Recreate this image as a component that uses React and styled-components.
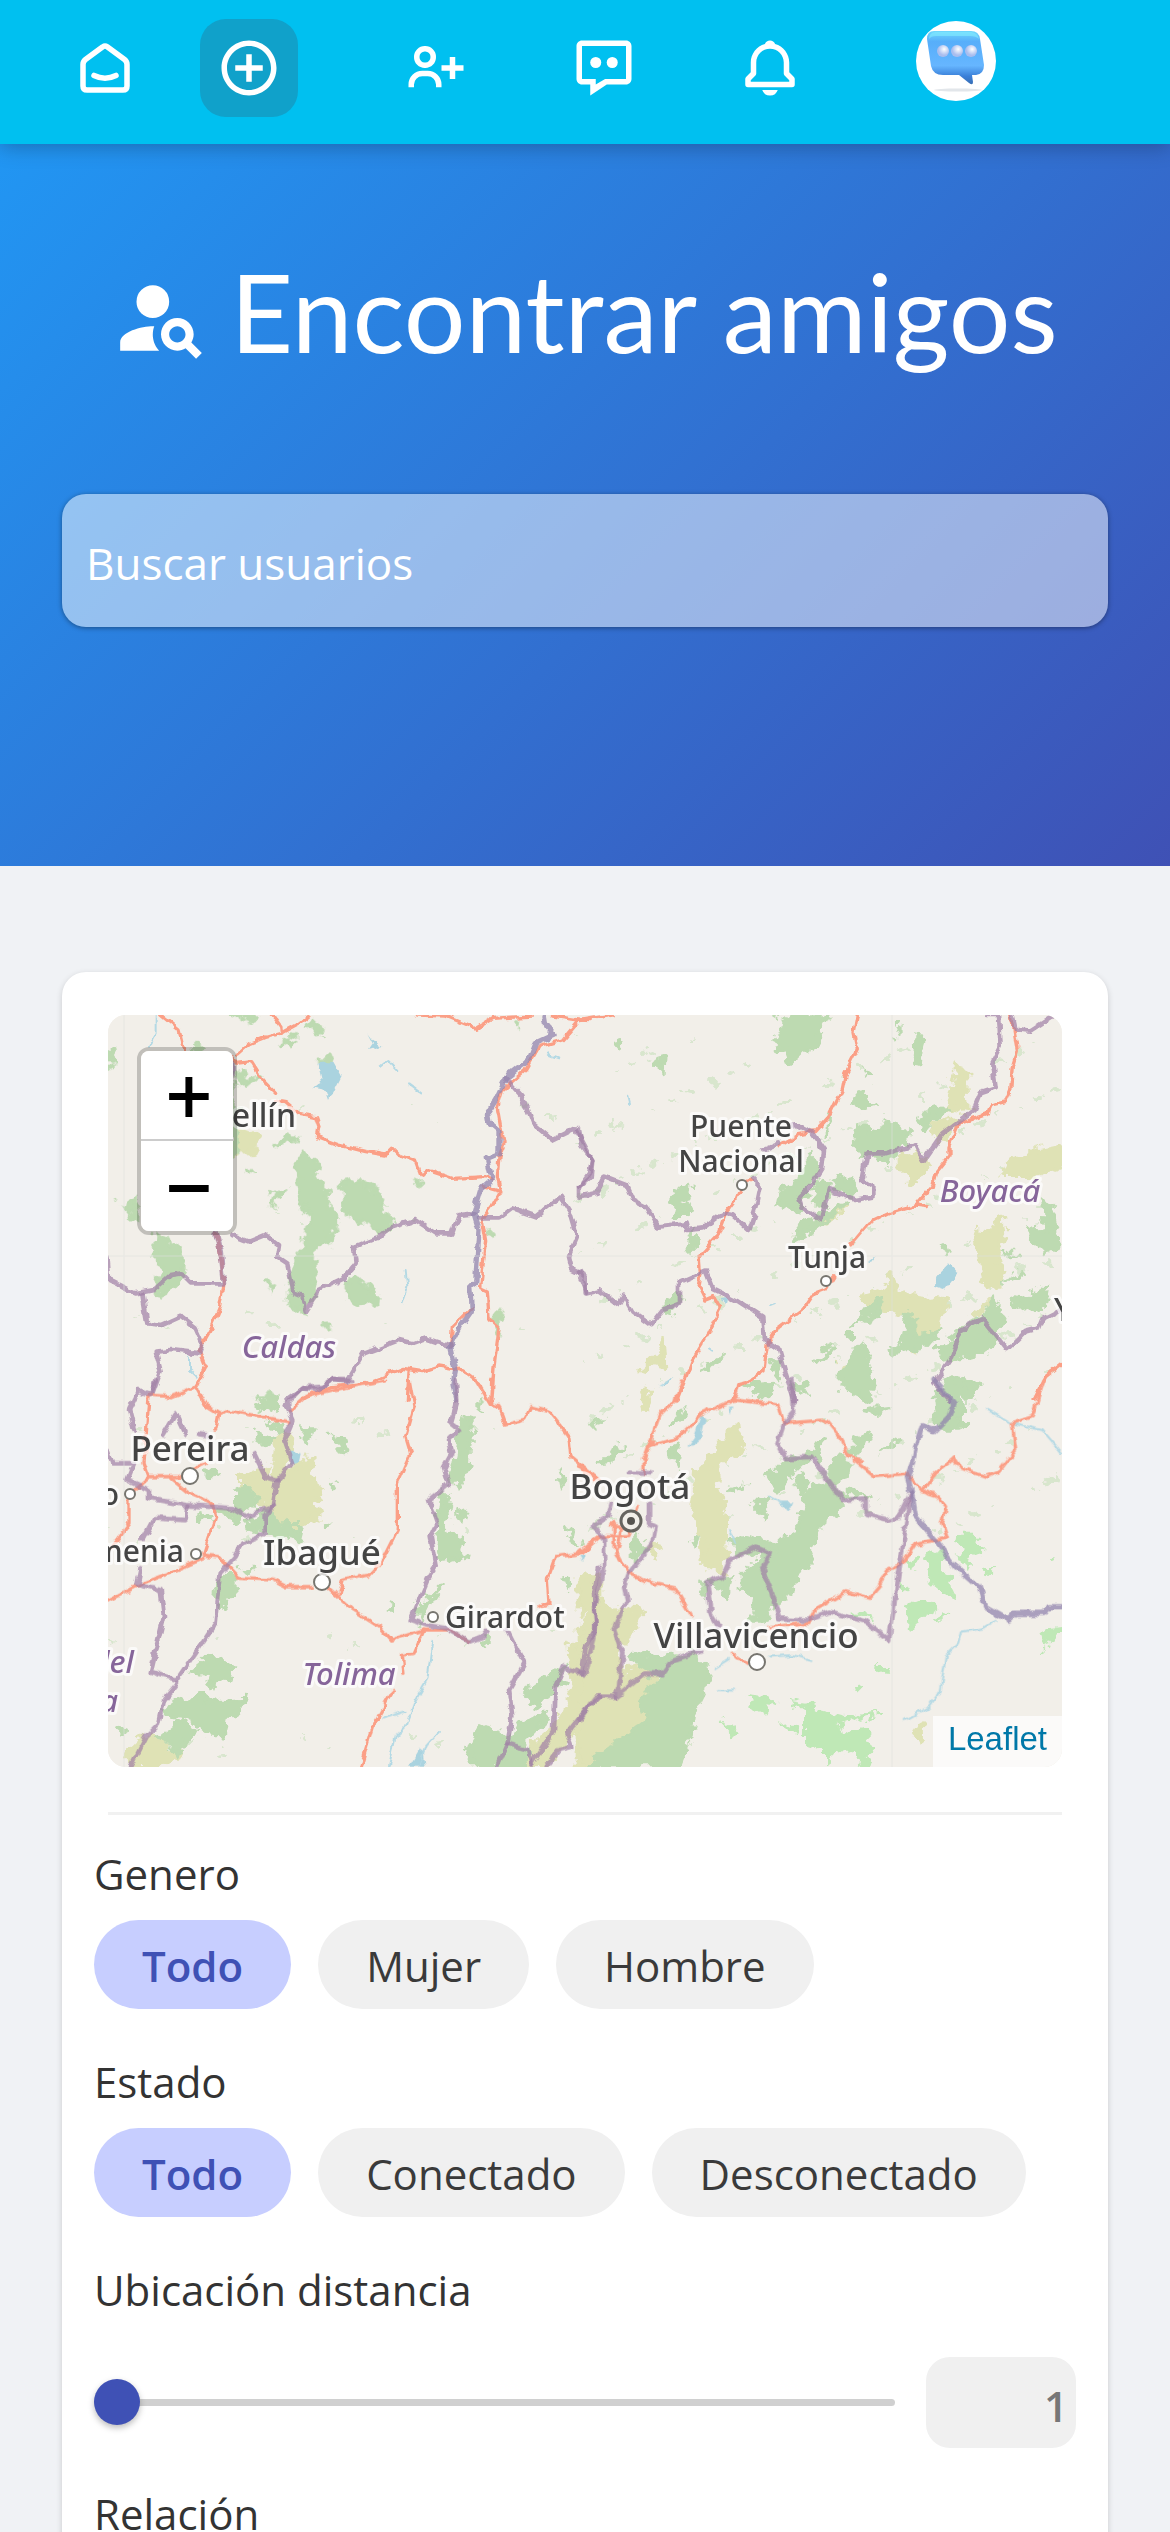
import React, { useState } from "react";
import styled, { createGlobalStyle } from "styled-components";
import { BiPlusCircle, BiUserPlus, BiBell } from "react-icons/bi";
import { MdPersonSearch } from "react-icons/md";

const GlobalStyle = createGlobalStyle`
  *, *::before, *::after { box-sizing: border-box; }
  body { margin: 0; background: #f0f2f5; }
`;

const Page = styled.div`
  height: 100vh;
  overflow-y: auto;
  scrollbar-width: none;
  background: #f0f2f5;
  color: #333;
  font-family: "Open Sans", "Noto Sans", sans-serif;
  font-size: 42px;
`;

const TopBar = styled.header`
  position: sticky;
  top: 0;
  z-index: 10;
  height: 144px;
  background: #00c0f0;
  box-shadow: 0 2px 20px rgba(0, 0, 0, 0.28);
`;

const Nav = styled.nav`
  display: grid;
  grid-template-columns: 144fr 187fr 168fr 166fr 186fr 263fr;
  padding: 19px 0 0 56px;
`;

const NavLink = styled.a`
  display: flex;
  align-items: center;
  justify-content: center;
  width: 98px;
  height: 98px;
  border-radius: 26px;
  color: #fff;
  background: ${(p) => (p.$active ? "rgba(31, 130, 164, 0.5)" : "transparent")};

  svg {
    width: 66px;
    height: 66px;
  }
`;

const AvatarButton = styled.button`
  width: 98px;
  height: 84px;
  padding: 0;
  border: 0;
  background: none;

  svg {
    display: block;
    width: 80px;
    height: 80px;
    margin: 0 auto;
  }
`;

const Hero = styled.section`
  padding: 102px 62px 239px;
  background: linear-gradient(135deg, #2196f3 0%, #3f51b5 100%);
`;

const HeroTitle = styled.h1`
  display: flex;
  align-items: flex-end;
  justify-content: center;
  gap: 20px;
  margin: 0 0 118px;
  color: #fff;
  font-family: Lato, sans-serif;
  font-size: 109px;
  font-weight: 400;
  line-height: 130px;
  white-space: nowrap;

  svg {
    flex: none;
    width: 98px;
    height: 98px;
    margin-bottom: 9px;
  }
`;

const SearchInput = styled.input`
  display: block;
  width: 100%;
  height: 133px;
  padding: 4px 24px 0;
  border: 0;
  border-radius: 24px;
  outline: 0;
  background: rgba(255, 255, 255, 0.5);
  box-shadow: 0 1px 5px rgba(0, 0, 0, 0.4);
  color: #fff;
  font: 400 44px "Open Sans", sans-serif;

  &::placeholder {
    color: #fff;
    opacity: 1;
  }
`;

const Main = styled.main`
  padding: 106px 62px 62px;
`;

const Card = styled.section`
  padding: 43px 0;
  border-radius: 24px;
  background: #fff;
  box-shadow: 0 2px 6px rgba(0, 0, 0, 0.16);
`;

const MapFrame = styled.div`
  position: relative;
  height: 752px;
  margin: 0 46px;
  overflow: hidden;
  border-radius: 18px;
  background: #f2efe9;

  > svg {
    display: block;
    width: 100%;
    height: 100%;
  }
`;

const ZoomControl = styled.div`
  position: absolute;
  top: 32px;
  left: 29px;
  display: flex;
  flex-direction: column;
  border: 4px solid rgba(0, 0, 0, 0.2);
  border-radius: 12px;
  background-clip: padding-box;
`;

const ZoomButton = styled.button`
  width: 92px;
  height: 90px;
  padding: 0 0 0 4px;
  border: 0;
  background: #fff;
  color: #000;
  font: 400 60px/80px "DejaVu Sans", sans-serif;
  -webkit-text-stroke: 2px #000;

  &:first-child {
    border-bottom: 2px solid #ccc;
    border-radius: 8px 8px 0 0;
  }
  &:last-child {
    border-radius: 0 0 8px 8px;
  }
`;

const Attribution = styled.div`
  position: absolute;
  right: 0;
  bottom: 0;
  padding: 0 15px 5px;
  background: rgba(255, 255, 255, 0.7);
  font: 33px/46px "Liberation Sans", Arial, sans-serif;

  a {
    color: #0078a8;
    text-decoration: none;
  }
`;

const Divider = styled.hr`
  height: 3px;
  margin: 45px 46px 29px;
  border: 0;
  background: #f1f1f1;
`;

const Filters = styled.form`
  display: flex;
  flex-direction: column;
  gap: 43px;
  padding: 0 32px;
`;

const Field = styled.div`
  display: flex;
  flex-direction: column;
  gap: 16px;
`;

const FieldLabel = styled.label`
  line-height: 60px;
`;

const PillRow = styled.div`
  display: flex;
  flex-wrap: wrap;
  gap: 27px;
`;

const Pill = styled.label`
  display: block;
  height: 89px;
  padding: 2px 48px 0;
  border-radius: 45px;
  background: ${(p) => (p.$checked ? "#c7ceff" : "#f0f0f0")};
  color: ${(p) => (p.$checked ? "#3f51b5" : "#3a3a3a")};
  font-weight: ${(p) => (p.$checked ? 600 : 400)};
  line-height: 87px;
  cursor: pointer;
`;

const HiddenRadio = styled.input`
  position: absolute;
  width: 1px;
  height: 1px;
  margin: 0;
  opacity: 0;
  pointer-events: none;
`;

const DistanceField = styled(Field)`
  margin-bottom: -7px;
`;

const DistanceRow = styled.div`
  display: flex;
  align-items: center;
  gap: 31px;
  margin-top: 21px;
`;

const Range = styled.input`
  flex: 1;
  min-width: 0;
  height: 48px;
  margin: 0;
  appearance: none;
  background: transparent;

  &::-webkit-slider-runnable-track {
    height: 7px;
    border-radius: 4px;
    background: #d0d0d0;
  }
  &::-webkit-slider-thumb {
    appearance: none;
    width: 46px;
    height: 46px;
    margin-top: -20px;
    border: 0;
    border-radius: 50%;
    background: #3f51b5;
    box-shadow: 0 3px 6px rgba(0, 0, 0, 0.26);
  }
`;

const DistanceValue = styled.input`
  width: 150px;
  height: 91px;
  padding: 6px 8px 0;
  border: 0;
  border-radius: 24px;
  background: #f0f0f0;
  color: #777;
  font: 600 42px "Open Sans", sans-serif;
  text-align: right;
`;

function HomeIcon() {
  return (
    <svg viewBox="0 0 24 24" fill="none" stroke="currentColor" strokeWidth="2" strokeLinecap="round" aria-hidden="true">
      <path d="M11.200 4.300L4.900 8.900Q4 9.600 4 10.700V18.500Q4 20 5.500 20H18.500Q20 20 20 18.500V10.700Q20 9.600 19.100 8.900L12.800 4.300Q12 3.700 11.200 4.300z" />
      <path d="M8 14.700q4 2 8 0" />
    </svg>
  );
}

function ChatIcon() {
  return (
    <svg viewBox="0 0 24 24" fill="currentColor" aria-hidden="true">
      <path
        fillRule="evenodd"
        d="M20 2H4c-1.100 0-2 .9-2 2v12c0 1.100.9 2 2 2h3v4l6-4h7c1.100 0 2-.9 2-2V4c0-1.100-.9-2-2-2zM20 16h-7.600L9 18v-2H4V4h16z"
      />
      <circle cx="9" cy="10" r="2" />
      <circle cx="15" cy="10" r="2" />
    </svg>
  );
}

function AvatarPicture() {
  return (
    <svg viewBox="0 0 80 80" aria-hidden="true">
      <defs>
        <linearGradient id="bubble" x1="0" y1="0" x2="0" y2="1">
          <stop offset="0" stopColor="#6fd8fc" />
          <stop offset="0.2" stopColor="#57aefa" />
          <stop offset="0.65" stopColor="#66b6ff" />
          <stop offset="0.85" stopColor="#3a7fd8" />
          <stop offset="1" stopColor="#386fb5" />
        </linearGradient>
        <radialGradient id="pearl" cx="0.6" cy="0.35">
          <stop offset="0" stopColor="#fff" />
          <stop offset="1" stopColor="#a9bdee" />
        </radialGradient>
      </defs>
      <circle cx="40" cy="40" r="40" fill="#fff" />
      <ellipse cx="42" cy="69" rx="24" ry="1.500" fill="#e2e6ea" />
      <path
        d="M18 10h37q8 0 9 8l4 26q0 9-8 10h-4l1 7q0 4-4 1l-10-8H27q-10 0-12-9l-4-27q0-8 7-8z"
        fill="url(#bubble)"
      />
      <path d="M19 11h36q7 1 8 7-3-3-9-3H20q-5 0-7 3 0-6 6-7z" fill="#84ecff" opacity="0.6" />
      {[27, 41, 55].map((x) => (
        <ellipse key={x} cx={x} cy="30" rx="6" ry="6" fill="url(#pearl)" />
      ))}
    </svg>
  );
}

/* Map geometry: every sector holds point lists in its own grid, three units to a pixel. */
const SECTORS = [
  {
    x: -8,
    y: -15,
    forest: [
      "610,460 640,466 650,480 670,500 640,520 690,565 680,600 720,660 690,700 700,730 650,740 645,860 620,940 570,920 565,860 590,770 620,740 630,650 600,560 590,520",
      "725,550 770,538 810,550 845,600 850,640 885,665 850,700 780,660 735,630 740,580",
      "740,850 770,830 835,880 830,910 790,920 735,880",
      "170,700 240,740 258,810 180,890 175,850 200,820 165,770",
      "530,440 560,405 600,420 560,425", "515,610 530,575 560,565 550,590", "390,45 470,45 460,68 430,55",
      "620,75 650,60 670,80 660,105", "555,120 590,110 575,145", "25,150 45,150 40,200 25,205", "60,620 110,590 110,655",
      "410,210 470,240 440,265 415,240", "500,845 530,855 520,870", "280,140 310,140 300,155", "1250,60 1265,60 1260,78",
      "950,545 970,540 960,560", "675,970 690,970 685,985", "450,512 465,512 458,522", "1170,695 1190,700 1180,708",
      "480,1195 540,1180 540,1200", "655,175 690,175 700,205 680,200", "400,250 410,260 412,460 400,470", "1185,935 1205,938 1200,1010 1190,960",
    ],
    heath: ["405,395 440,385 480,410 470,450 405,455"],
    water: ["655,190 700,185 725,230 690,300 680,270 640,262 670,250", "805,100 820,120 848,138 810,150 822,132"],
    stream: ["840,200 865,180 895,210", "930,250 970,280", "1345,160 1378,172", "170,45 170,100 150,140", "920,810 925,860 908,910", "270,1070 270,1110 290,1130"],
    road: [
      "185,45 240,90 255,150", "415,165 455,130 500,112 545,100 600,70 630,45", "520,45 545,80 548,100",
      "400,170 415,190 455,185 490,240 530,280",
      "530,300 560,305 600,340 650,350 660,380 655,410 680,420 720,435 800,455 860,465 880,445 900,465 950,485 965,525 990,512 1060,535 1160,530 1180,540",
      "955,45 1040,48 1130,85 1180,55 1300,48", "1360,48 1440,60 1480,62",
      "1440,60 1390,120 1320,140 1280,210 1210,270 1195,320 1205,380 1215,430 1200,470 1195,530 1205,575 1180,620 1150,660 1160,720 1145,860 1165,870 1170,960 1200,985 1185,1100 1178,1210",
      "1155,560 1205,575", "350,700 365,770 375,850 365,920 340,980 300,1050 320,1100 290,1160",
      "610,1195 700,1160 800,1150 910,1105 970,1115 1020,1098 1090,1110 1130,1140", "930,1115 925,1200", "1120,920 1060,980 1055,1040",
    ],
    border: [
      "1220,235 1270,290 1300,370 1360,420 1430,385 1480,480 1470,520 1440,560",
      "400,705 450,725 500,705 540,735 535,770 565,790 585,880 610,890 620,935 660,870 735,835 770,790 765,740 840,710 870,685 950,660 1010,700 1060,700 1080,645 1125,640",
      "1140,655 1200,655 1240,625 1310,650 1385,590 1415,640 1435,710 1410,770 1420,810 1460,830 1460,880",
      "25,770 30,840 110,880 165,870 215,825 245,820 275,850 375,850 365,760 350,700", "400,230 400,180",
      "130,880 145,970 190,975 245,950 290,985 310,1030 300,1060 220,1050 170,1055 185,1110 160,1180",
      "560,1200 610,1165 660,1170 700,1140 745,1145 795,1060 900,1020 940,1030 980,1015 1055,1040",
    ],
    river: ["1335,45 1340,75 1365,105 1310,130 1290,180 1220,235 1190,300 1165,340 1170,370 1200,395 1200,460 1165,475 1180,540 1145,570 1125,640 1140,690 1130,850 1115,860 1120,930 1085,980 1055,1040 1070,1110 1062,1150 1072,1200"],
  },
  {
    x: 472,
    y: -15,
    forest: [
      "630,45 745,45 715,100 720,140 670,160 635,190 620,150 580,130", "1005,110 1035,115 1025,185 1000,180",
      "820,310 835,275 855,270 880,320 850,330", "870,400 940,360 985,400 975,440 920,490 870,450 840,470 830,440 845,370",
      "690,475 720,500 700,550 650,630 605,620 615,570 650,545", "650,720 670,670 740,630 800,610 750,660 690,700",
      "760,540 830,530 820,590 790,570", "1020,350 1110,320 1070,360 1030,385",
      "1140,990 1210,950 1235,900 1270,930 1260,1000 1210,1070 1100,1080 1075,1040", "1060,1200 1120,1130 1200,1150 1180,1200",
      "1305,905 1350,890 1400,855 1390,920 1330,930", "930,1060 970,1020 985,930 1010,960 1010,1010 1085,990 1040,1040",
      "790,1100 850,1030 880,1130 870,1200 790,1160", "870,920 900,900 910,930 820,980", "715,1090 740,1050 770,1035 740,1075",
      "520,1160 590,1160 550,1200", "640,1160 690,1140 680,1180", "1340,690 1430,680 1430,740 1400,755", "265,890 300,880 290,940 265,930",
      "370,1110 430,1070 390,1120", "330,740 350,690 345,750", "270,610 295,570 330,560 340,590 310,600 330,640 290,640", "1280,760 1320,760 1290,770",
      "1280,840 1330,815 1300,840", "795,1010 820,1000 820,1020", "1395,600 1430,640 1440,690 1400,700", "580,1080 605,1080 600,1130 585,1110",
      "580,45 600,45 590,60", "110,130 130,125 122,145", "240,175 258,170 255,215 245,200", "860,205 880,230 870,225", "950,80 960,80 960,110", "745,330 755,340 745,400",
      "720,540 760,560 750,600 730,620 700,600", "1090,735 1100,735 1098,760",
    ],
    heath: [
      "1130,200 1160,210 1165,330 1105,320 1120,260", "960,470 1010,460 1050,490 1000,550 960,500", "1060,380 1150,350 1080,420",
      "1190,690 1240,700 1270,650 1275,700 1260,770 1270,850 1220,850 1210,780", "1265,530 1310,470 1450,440 1450,500 1350,530",
      "850,890 920,870 940,820 950,880 1100,900 1080,980 1030,1010 1000,1050 1020,950 880,920", "185,1110 235,1060 250,1010 255,1100 215,1090",
      "790,1090 840,1080 830,1130", "200,1180 215,1180 210,1200", "1175,945 1220,910 1190,950", "740,640 800,620 740,670",
    ],
    water: ["1065,860 1080,820 1110,790 1135,820 1095,870", "245,1160 280,1130 270,1150", "420,895 445,890 440,912", "870,785 890,770 880,785"],
    stream: ["570,918 585,912", "390,1045 400,1052", "145,290 150,310"],
    road: [
      "835,45 825,100 835,150 800,220 790,270 750,350 710,395 655,405 600,440",
      "515,540 490,550 470,600 440,640 415,710 360,770 365,830 360,860 380,900 405,890 425,925 390,1000 340,1080 295,1200",
      "1295,45 1305,90 1315,150 1300,200 1295,270 1280,305 1235,315 1225,340 1140,370 1110,440 1110,470 1070,520 1060,560 1010,615 940,635 870,670 815,735",
      "765,830 740,870 700,885 670,930 590,990 565,1030 555,1110 475,1165 460,1200", "1450,1090 1400,1130 1365,1200", "1010,615 1045,620", "0,62 100,45",
    ],
    border: [
      "0,390 10,440 40,480 35,530 0,560 0,590 50,580 75,530 140,555 160,600 200,620 235,680 320,670 325,690 370,685 430,640 460,645 510,690 530,630 545,560 520,535",
      "640,370 700,400 735,450 730,500 700,550 660,590 670,620 725,660 750,570 830,600 880,590 880,560 850,540 865,460 920,460 1010,435 1035,480 1090,400 1185,330 1205,280 1250,265 1240,190 1265,140 1260,45 1225,45",
      "1300,45 1310,90 1350,95 1420,50", "600,430 555,450",
      "0,815 25,880 60,870 120,915 135,890 160,935 215,975 250,930 300,910 300,850 380,815 400,865 480,905 550,950 555,1020 600,1050 620,1120 645,1200",
      "1450,930 1390,960 1380,985 1340,995 1285,1050 1210,955 1145,990 1120,1070 1065,1150 1110,1200",
    ],
    river: [],
  },
  {
    x: -8,
    y: 365,
    forest: [
      "475,75 540,40 545,80 500,90", "410,340 430,325 480,345 460,390 410,385", "460,410 500,380 560,440 610,440 600,480 450,450",
      "360,390 430,390 430,425 370,410", "1090,110 1120,120 1110,260 1080,320 1055,300 1070,220",
      "1030,330 1055,350 1040,450 1085,470 1075,520 1110,530 1020,545 1010,500", "960,680 1030,610 980,690 960,730",
      "360,590 400,590 405,640 370,680 350,650", "265,880 330,820 400,860 390,905 350,900 340,920 320,890",
      "200,980 310,940 330,965 435,955 420,1000 380,1030 375,1065 320,1060 270,1020 210,1010", "170,1080 240,1025 280,1050 240,1130 210,1090",
      "1150,1040 1225,1070 1225,1160 1120,1160 1105,1110", "1270,940 1400,850 1385,920 1310,980", "1230,1090 1260,1030 1340,1000 1320,1040 1260,1100",
      "1440,1160 1500,1080 1500,1160", "1230,1090 1290,1110 1270,1160 1200,1160", "700,160 730,180 740,215 710,195", "470,150 530,180 500,195 475,180",
      "600,150 660,150 620,180", "865,690 880,660 880,690", "320,270 355,275 350,290 325,290", "1070,410 1100,400 1090,425", "430,570 460,565 450,580",
      "300,410 340,400 330,420", "55,1045 85,1050 75,1060", "1395,590 1410,590 1405,620", "1140,60 1155,90 1140,80", "670,430 690,430 685,445",
      "500,130 550,140 540,155", "1380,270 1400,300 1390,320", "1400,440 1440,490 1420,480", "690,310 715,315 700,320", "1145,790 1165,770 1160,800",
    ],
    heath: [
      "430,290 490,270 520,300 540,140 570,160 560,280 640,235 630,300 670,330 640,370 655,410 590,440 530,440 500,400 520,360 480,370 430,340",
      "1510,730 1510,950 1340,1160 1280,1160 1300,1100 1380,1030 1420,930 1410,800", "85,1110 140,1060 180,1090 250,1130 180,1160 90,1160",
    ],
    water: ["575,215 605,220 600,245 575,250", "1445,530 1460,525 1455,545", "960,1110 975,1120 980,1160 930,1160"],
    stream: ["1000,780 985,900 950,960 920,1040 890,1070 870,1160", "1020,1055 980,1100 960,1160", "850,1015 920,995"],
    road: [
      "1130,0 1175,75 1200,80 1220,135 1275,120 1295,80 1350,95 1410,170 1415,230 1500,300", "1178,0 1175,70",
      "1500,475 1450,520 1370,530 1345,600 1350,670 1320,680", "930,0 945,80 920,170 935,220 895,310 895,450 850,540 810,585 730,600 720,640",
      "290,20 320,75 360,100 390,90 480,110 570,125", "360,100 350,150", "570,95 620,50 700,30 780,15 860,0", "150,45 220,50 300,15",
      "150,50 135,250 150,290 90,345 90,430 30,510", "150,290 240,290 320,250", "215,295 270,340 340,370 350,410 315,520",
      "315,525 360,530 420,595 520,600 560,620 640,620", "690,625 760,690 840,740 875,780 975,750 1050,750 1110,785",
      "975,750 945,820 910,825 915,880", "880,935 820,1040 785,1160", "25,665 130,610 220,575 315,535",
    ],
    border: [
      "170,0 155,45 120,30 90,90 105,150", "190,165 230,100 260,165", "300,165 330,170",
      "25,210 40,250 105,250 85,300 150,330 150,355 260,375 400,385 440,410 520,380 535,300 580,250 555,180 580,120 560,75 610,25 670,20 700,0 760,0",
      "465,220 500,290 535,300", "265,380 260,420 165,415 130,480", "125,565 115,615 185,630 195,710 155,875 235,900 290,820 350,730 365,580 410,530 430,490 500,460 500,410 525,375",
      "235,910 195,960 180,1030 140,1070 95,1160",
      "1070,0 1075,60 1055,130 1080,150 1050,180 1060,220 1035,265 1050,310 990,360 1015,430 995,470 1010,560 985,600 935,720 980,735 1040,745 1110,785 1150,770 1165,750",
      "1225,750 1275,850 1230,930 1240,1010 1225,1090 1195,1160", "1500,560 1485,640 1490,750 1460,800 1450,880 1395,860 1370,920 1365,1050 1300,1150",
      "1225,1090 1290,1110 1300,1150", "1500,950 1460,990 1405,1060 1420,1100 1380,1110 1340,1160",
    ],
    river: [],
  },
  {
    x: 472,
    y: 365,
    forest: [
      "780,220 810,260 775,310 790,380 720,440 690,540 640,640 590,670 560,720 520,720 530,650 490,630 490,580 540,540 590,490 650,450 680,340 750,300 750,260",
      "570,290 620,240 680,220 740,180 720,230 640,270 630,310 590,330", "150,830 340,820 390,870 370,950 345,1000 340,1060 300,1160 20,1160 100,1100 200,1020 180,960 240,890",
      "800,0 885,0 880,30 780,30", "820,180 880,150 860,200 820,220", "1070,50 1100,0 1200,20 1150,60 1150,150 1080,150", "500,15 590,10 550,50",
      "390,600 460,590 450,650", "450,480 500,470 590,490 590,510 480,530", "270,130 320,90 310,120 280,130", "520,370 570,370 560,410", "660,280 690,310 670,340 650,300",
      "280,200 300,190 290,260", "160,500 180,480 200,500 160,550", "30,125 75,120 40,135", "850,90 930,80 890,100", "340,470 360,470 350,500", "450,330 500,310 460,340",
      "60,260 100,210 130,200 80,260", "790,340 840,340 880,350 820,350", "900,215 960,175 940,200", "360,620 370,600 380,640",
    ],
    meadow: [
      "1130,460 1180,460 1220,510 1170,530 1160,570 1140,540 1160,500", "1040,530 1090,510 1090,570 1140,660 1100,640 1050,600", "970,680 1040,650 1070,690 1000,735",
      "980,540 1020,530 1010,570", "500,950 590,960 560,1000 520,980", "680,980 800,1010 900,1000 770,1040 860,1060 890,1110 850,1160 820,1110 760,1130 740,1160 740,1110 680,1090",
      "600,1040 650,1030 660,1060", "890,860 935,860 910,885", "820,700 870,690 880,720", "430,1030 480,1050 460,1070", "1210,560 1250,560 1220,590",
      "1070,720 1110,700 1080,730", "820,915 850,910 830,930", "630,965 700,975 690,985", "1410,540 1435,530 1420,550", "960,610 990,620 970,635", "1390,745 1450,740 1400,810",
    ],
    heath: [
      "350,280 450,160 480,130 490,200 420,250 410,320 440,400 440,480 430,580 380,560 370,470 340,380",
      "0,740 60,680 190,690 160,760 120,800 130,880 240,850 190,960 210,1000 120,1080 0,1160", "0,600 60,590 60,690 0,700",
      "520,590 540,580 530,630", "190,40 215,30 205,90", "580,500 610,505 590,520", "210,500 245,505 220,520", "1000,1070 1030,1035 1025,1090",
    ],
    water: ["325,200 345,170 365,110 380,120 365,180 340,200", "600,365 640,365 625,395", "450,80 460,80 455,105", "0,530 20,530 10,545"],
    stream: [
      "570,830 640,825 700,840", "1250,720 1210,745 1150,755 1140,790 1100,830 1085,930 1050,980 980,1020", "1230,90 1300,130 1390,150 1450,220", "420,930 465,932",
      "570,350 610,370", "450,450 465,490", "410,865 450,840", "240,15 265,5",
    ],
    road: [
      "310,0 290,60 240,110 215,180 195,240 195,280", "220,195 300,170 370,100 465,60 480,15 510,0", "225,180 190,240",
      "465,60 600,75 615,130 740,120 790,180 800,220 840,250 890,290 980,280 1030,335 1075,350 1100,380 1090,430 1105,475 1010,490 970,550 925,570 900,620 870,655 800,635 710,690 690,730",
      "820,240 850,245", "1030,335 1070,280 1125,235 1145,265 1220,290 1260,275 1310,210 1300,130 1360,110 1395,0", "0,260 50,300",
      "0,520 60,470 150,470 180,380", "95,435 140,440", "105,430 105,500 150,580 220,610 290,625 340,710", "130,430 125,480 110,520 130,545", "460,820 480,840 510,850", "570,740 690,730",
    ],
    border: [
      "640,0 645,95 615,130 595,190 620,235 700,230 740,290 790,360 860,355 860,400 920,418 960,410 995,340",
      "995,340 930,780 860,725 750,695 690,720 600,715 580,640 550,570 575,520 530,500 450,545 430,590 385,610 395,700 420,740", "150,275 220,280",
      "95,370 85,410 45,435 75,480 75,560 45,680 50,740 20,880 0,880",
      "210,370 210,430 230,440 220,490 150,580 135,620 145,660 105,750 130,820 120,920 110,950 200,880 250,880 280,840 370,810", "0,1020 50,950 110,950",
    ],
    river: ["1065,0 1125,70 1110,110 1065,155 1030,135 1010,200 1000,250 985,290 1000,350 1010,410 1070,480 1130,560 1200,620 1220,680 1290,720 1310,700 1395,700 1410,680 1450,680"],
  },
];

const SPECKLES = Array.from({ length: 190 }, (_, i) => ({
  x: 470 + ((i * 197) % 480),
  y: 20 + ((i * 131) % 500),
  r: 1 + (i % 3),
})).concat(
  Array.from({ length: 50 }, (_, i) => ({ x: (i * 83) % 470, y: (i * 211) % 740, r: 1 + (i % 2) }))
);

const TOWNS = [
  { name: "ellín", x: 189, y: 112, size: 32, anchor: "end" },
  { name: "Puente", x: 634, y: 122, size: 30 },
  { name: "Nacional", x: 634, y: 157, size: 30 },
  { name: "Tunja", x: 720, y: 253, size: 30 },
  { name: "Pereira", x: 83, y: 446, size: 35 },
  { name: "o", x: 12, y: 490, size: 30, anchor: "end" },
  { name: "menia", x: 77, y: 547, size: 30, anchor: "end" },
  { name: "Ibagué", x: 215, y: 550, size: 35 },
  { name: "Girardot", x: 338, y: 613, size: 30, anchor: "start" },
  { name: "Bogotá", x: 523, y: 484, size: 35 },
  { name: "Villavicencio", x: 649, y: 633, size: 35 },
  { name: "Y", x: 947, y: 306, size: 32, anchor: "start" },
];

const REGIONS = [
  { name: "Boyacá", x: 883, y: 187 },
  { name: "Caldas", x: 182, y: 343 },
  { name: "Tolima", x: 242, y: 670 },
  { name: "del", x: 27, y: 658, anchor: "end" },
  { name: "a", x: 11, y: 697, anchor: "end" },
];

const MARKERS = [
  [635, 170, 5], [719, 266, 5], [83, 461, 8], [23, 479, 5], [89, 539, 5],
  [215, 567, 8], [326, 602, 5], [650, 647, 8],
];

const MapLabel = styled.text`
  font-family: "Noto Sans", sans-serif;
  font-size: ${(p) => p.$size}px;
  font-weight: 500;
  font-style: ${(p) => (p.$region ? "italic" : "normal")};
  fill: ${(p) => (p.$region ? "#86659a" : "#444")};
  paint-order: stroke;
  stroke: rgba(255, 255, 255, 0.7);
  stroke-width: 6px;
  stroke-linejoin: round;
`;

function Shapes({ list, fill, swell = 0 }) {
  return (list || []).map((points) => (
    <polygon key={points} points={points} fill={fill} stroke={fill} strokeWidth={swell} strokeLinejoin="round" />
  ));
}

function Lines({ list, ...style }) {
  return (list || []).map((points) => (
    <polyline key={points} points={points} fill="none" strokeLinejoin="round" strokeLinecap="round" {...style} />
  ));
}

function ColombiaMap() {
  const layer = (render) =>
    SECTORS.map((s) => (
      <g key={`${s.x}:${s.y}`} transform={`translate(${s.x} ${s.y}) scale(0.33333)`}>
        {render(s)}
      </g>
    ));
  return (
    <svg viewBox="0 0 956 752" preserveAspectRatio="xMidYMid slice" role="img" aria-label="Mapa">
      <defs>
        <filter id="ragged" x="0" y="0" width="956" height="752" filterUnits="userSpaceOnUse">
          <feTurbulence type="fractalNoise" baseFrequency="0.09" numOctaves="3" seed="4" result="n" />
          <feDisplacementMap in="SourceGraphic" in2="n" scale="18" xChannelSelector="R" yChannelSelector="G" />
          <feGaussianBlur stdDeviation="0.7" />
        </filter>
        <filter id="winding" x="0" y="0" width="956" height="752" filterUnits="userSpaceOnUse">
          <feTurbulence type="fractalNoise" baseFrequency="0.1" numOctaves="2" seed="9" result="n" />
          <feDisplacementMap in="SourceGraphic" in2="n" scale="7" xChannelSelector="R" yChannelSelector="G" />
          <feGaussianBlur stdDeviation="0.6" />
        </filter>
      </defs>
      <rect width="956" height="752" fill="#f2efe9" />
      <g filter="url(#ragged)">
        {SPECKLES.map((s, i) => (
          <ellipse key={i} cx={s.x} cy={s.y} rx={s.r * 2} ry={s.r} fill="#c6dfba" opacity="0.6" />
        ))}
        {layer((s) => (
          <>
            <Shapes list={s.heath} fill="#dfe2b5" swell={14} />
            <Shapes list={s.forest} fill="#bddab1" swell={10} />
            <Shapes list={s.meadow} fill="#bfe8b6" swell={4} />
          </>
        ))}
      </g>
      <g filter="url(#winding)">
        {layer((s) => (
          <>
            <Shapes list={s.water} fill="#aad3df" />
            <Lines list={s.stream} stroke="#b4d9e4" strokeWidth="6" />
            <Lines list={s.road} stroke="#fb9f86" strokeWidth="10" />
            <Lines list={s.border} stroke="#a07fa5" strokeWidth="14" opacity="0.7" />
            <Lines list={s.river} stroke="#9284ad" strokeWidth="16" opacity="0.75" />
          </>
        ))}
      </g>
      <path d="M17 0V752M785 0V752M0 241H956" stroke="#dfe2df" strokeWidth="1" opacity="0.6" />
      {MARKERS.map(([x, y, r]) => (
        <circle key={`${x}-${y}`} cx={x} cy={y} r={r} fill="#fff" stroke="#77756f" strokeWidth="2" />
      ))}
      <circle cx="524" cy="506" r="10" fill="#f2efe9" stroke="#66645f" strokeWidth="3" />
      <circle cx="524" cy="506" r="4" fill="#55534f" />
      {REGIONS.map((r) => (
        <MapLabel key={r.name} x={r.x} y={r.y} $size={31} $region textAnchor={r.anchor || "middle"}>
          {r.name}
        </MapLabel>
      ))}
      {TOWNS.map((t) => (
        <MapLabel key={t.name} x={t.x} y={t.y} $size={t.size} textAnchor={t.anchor || "middle"}>
          {t.name}
        </MapLabel>
      ))}
    </svg>
  );
}

function PillGroup({ label, name, options }) {
  const [value, setValue] = useState(options[0]);
  return (
    <Field role="radiogroup" aria-labelledby={`${name}-label`}>
      <FieldLabel as="div" id={`${name}-label`}>
        {label}
      </FieldLabel>
      <PillRow>
        {options.map((option) => (
          <Pill key={option} $checked={value === option}>
            <HiddenRadio
              type="radio"
              name={name}
              value={option}
              checked={value === option}
              onChange={() => setValue(option)}
            />
            {option}
          </Pill>
        ))}
      </PillRow>
    </Field>
  );
}

export default function App() {
  const [distance, setDistance] = useState(1);
  return (
    <Page>
      <GlobalStyle />
      <TopBar>
        <Nav aria-label="Principal">
          <NavLink href="#inicio" aria-label="Inicio"><HomeIcon /></NavLink>
          <NavLink href="#crear" aria-label="Crear" $active><BiPlusCircle /></NavLink>
          <NavLink href="#amigos" aria-label="Amigos"><BiUserPlus /></NavLink>
          <NavLink href="#mensajes" aria-label="Mensajes"><ChatIcon /></NavLink>
          <NavLink href="#avisos" aria-label="Notificaciones"><BiBell /></NavLink>
          <AvatarButton type="button" aria-label="Perfil"><AvatarPicture /></AvatarButton>
        </Nav>
      </TopBar>

      <Hero>
        <HeroTitle>
          <MdPersonSearch aria-hidden="true" />
          Encontrar amigos
        </HeroTitle>
        <SearchInput type="text" placeholder="Buscar usuarios" aria-label="Buscar usuarios" />
      </Hero>

      <Main>
        <Card>
          <MapFrame>
            <ColombiaMap />
            <ZoomControl>
              <ZoomButton type="button" aria-label="Acercar">+</ZoomButton>
              <ZoomButton type="button" aria-label="Alejar">−</ZoomButton>
            </ZoomControl>
            <Attribution>
              <a href="#leaflet">Leaflet</a>
            </Attribution>
          </MapFrame>
          <Divider />
          <Filters>
            <PillGroup label="Genero" name="genero" options={["Todo", "Mujer", "Hombre"]} />
            <PillGroup label="Estado" name="estado" options={["Todo", "Conectado", "Desconectado"]} />
            <DistanceField>
              <FieldLabel htmlFor="distancia">Ubicación distancia</FieldLabel>
              <DistanceRow>
                <Range
                  id="distancia"
                  type="range"
                  min="1"
                  max="1000"
                  value={distance}
                  onChange={(e) => setDistance(e.target.value)}
                />
                <DistanceValue type="text" value={distance} readOnly aria-label="Distancia" />
              </DistanceRow>
            </DistanceField>
            <Field>
              <FieldLabel as="div">Relación</FieldLabel>
            </Field>
          </Filters>
        </Card>
      </Main>
    </Page>
  );
}
